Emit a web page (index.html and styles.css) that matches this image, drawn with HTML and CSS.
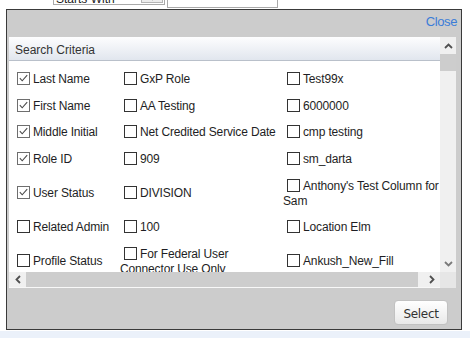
FILE: index.html
```html
<!DOCTYPE html>
<html>
<head>
<meta charset="utf-8">
<link rel="stylesheet" href="styles.css">
</head>
<body>
<div class="topbar">
  <div class="fake-select"><span class="sel-text">Starts With</span><span class="sel-btn"><svg width="9" height="6" viewBox="0 0 9 6"><polyline points="1,1 4.5,4.5 8,1" fill="none" stroke="#555" stroke-width="1.3"/></svg></span></div>
  <div class="fake-input"></div>
</div>
<div class="dialog">
  <div class="dlg-head"><a class="close">Close</a></div>
  <div class="panel">
    <div class="viewport">
      <div class="crit-head">Search Criteria</div>
      <div class="table-wrap">
        <table class="crit">
          <colgroup><col class="c1"><col class="c2"><col class="c3"></colgroup>
          <tr>
            <td><span class="cb on"><svg width="11" height="11" viewBox="0 0 11 11"><polyline points="1.8,5.2 4.2,7.8 9.2,2.2" fill="none" stroke="#4a4a4a" stroke-width="1.1"/></svg></span>Last Name</td>
            <td><span class="cb"></span>GxP Role</td>
            <td><span class="cb"></span>Test99x</td>
          </tr>
          <tr>
            <td><span class="cb on"><svg width="11" height="11" viewBox="0 0 11 11"><polyline points="1.8,5.2 4.2,7.8 9.2,2.2" fill="none" stroke="#4a4a4a" stroke-width="1.1"/></svg></span>First Name</td>
            <td><span class="cb"></span>AA Testing</td>
            <td><span class="cb"></span>6000000</td>
          </tr>
          <tr>
            <td><span class="cb on"><svg width="11" height="11" viewBox="0 0 11 11"><polyline points="1.8,5.2 4.2,7.8 9.2,2.2" fill="none" stroke="#4a4a4a" stroke-width="1.1"/></svg></span>Middle Initial</td>
            <td><span class="cb"></span>Net Credited Service Date</td>
            <td><span class="cb"></span>cmp testing</td>
          </tr>
          <tr>
            <td><span class="cb on"><svg width="11" height="11" viewBox="0 0 11 11"><polyline points="1.8,5.2 4.2,7.8 9.2,2.2" fill="none" stroke="#4a4a4a" stroke-width="1.1"/></svg></span>Role ID</td>
            <td><span class="cb"></span>909</td>
            <td><span class="cb"></span>sm_darta</td>
          </tr>
          <tr>
            <td><span class="cb on"><svg width="11" height="11" viewBox="0 0 11 11"><polyline points="1.8,5.2 4.2,7.8 9.2,2.2" fill="none" stroke="#4a4a4a" stroke-width="1.1"/></svg></span>User Status</td>
            <td><span class="cb"></span>DIVISION</td>
            <td><span class="cb"></span>Anthony's Test Column for Sam</td>
          </tr>
          <tr>
            <td><span class="cb"></span>Related Admin</td>
            <td><span class="cb"></span>100</td>
            <td><span class="cb"></span>Location Elm</td>
          </tr>
          <tr>
            <td><span class="cb"></span>Profile Status</td>
            <td><span class="cb"></span>For Federal User Connector Use Only</td>
            <td><span class="cb"></span>Ankush_New_Fill</td>
          </tr>
        </table>
      </div>
    </div>
    <div class="vbar">
      <div class="sb-btn v"><svg width="9" height="6" viewBox="0 0 9 6"><polyline points="1,5 4.5,1.5 8,5" fill="none" stroke="#505050" stroke-width="1.8"/></svg></div>
      <div class="thumb-v"></div>
      <div class="track"></div>
      <div class="sb-btn v"><svg width="9" height="6" viewBox="0 0 9 6"><polyline points="1,1 4.5,4.5 8,1" fill="none" stroke="#7a7a7a" stroke-width="1.8"/></svg></div>
    </div>
    <div class="hbar">
      <div class="sb-btn h"><svg width="6" height="9" viewBox="0 0 6 9"><polyline points="5,1 1.5,4.5 5,8" fill="none" stroke="#505050" stroke-width="1.8"/></svg></div>
      <div class="thumb-h"></div>
      <div class="track"></div>
      <div class="sb-btn h"><svg width="6" height="9" viewBox="0 0 6 9"><polyline points="1,1 4.5,4.5 1,8" fill="none" stroke="#505050" stroke-width="1.8"/></svg></div>
    </div>
    <div class="corner"></div>
  </div>
  <div class="dlg-foot"><button class="btn">Select</button></div>
</div>
<div class="page-strip"></div>
</body>
</html>
```

FILE: styles.css
```css
html, body {
  margin: 0;
  padding: 0;
}
body {
  background: #ffffff;
  font-family: "Liberation Sans", Arial, sans-serif;
  width: 470px;
  height: 338px;
  overflow: hidden;
}

/* top strip (cut-off search row) */
.topbar {
  height: 9px;
  overflow: hidden;
  display: flex;
  align-items: flex-end;
}
.fake-select {
  margin-left: 53px;
  margin-bottom: 4px;
  width: 112px;
  height: 20px;
  box-sizing: border-box;
  border: 1px solid #a9a9a9;
  display: flex;
  background: #fff;
}
.sel-text {
  flex: 1;
  padding: 4px 0 0 2px;
  font-size: 12px;
  line-height: 18px;
  color: #222;
}
.sel-btn {
  width: 22px;
  margin: 1px;
  box-sizing: border-box;
  border: 1px solid #b5b5b5;
  background: #ececec;
  display: flex;
  align-items: flex-end;
  justify-content: center;
  padding-bottom: 1px;
}
.fake-input {
  margin-left: 2px;
  margin-bottom: 1px;
  width: 111px;
  height: 22px;
  box-sizing: border-box;
  border: 1px solid #a9a9a9;
  background: #fff;
}

/* dialog */
.dialog {
  margin-left: 6px;
  width: 456px;
  height: 321px;
  box-sizing: border-box;
  border: 1px solid #3a3a3a;
  background: #cccccc;
  display: flex;
  flex-direction: column;
}
.dlg-head {
  height: 27px;
  flex: none;
  box-sizing: border-box;
  padding: 2px 4px 0 0;
  text-align: right;
}
.close {
  font-size: 13px;
  line-height: 15px;
  color: #3b7dd8;
  letter-spacing: -0.4px;
  text-decoration: none;
}

.panel {
  flex: none;
  margin-left: 2px;
  width: 447px;
  height: 251px;
  display: grid;
  grid-template-columns: 431px 16px;
  grid-template-rows: 235px 16px;
  background: #ffffff;
}
.viewport {
  overflow: hidden;
  background: #fff;
}
.crit-head {
  height: 24px;
  box-sizing: border-box;
  padding: 6px 0 0 6px;
  font-size: 12px;
  line-height: 15px;
  color: #333;
  background: linear-gradient(#fdfdfe, #e1e6ee);
  border-bottom: 1px solid #b9c0ca;
}
.table-wrap {
  padding-top: 5px;
}
.crit {
  border-collapse: collapse;
  table-layout: fixed;
  width: 432px;
}
.c1 { width: 107px; }
.c2 { width: 163px; }
.c3 { width: 162px; }
.crit td {
  padding: 6px 0 6px 4px;
  vertical-align: middle;
  font-size: 12px;
  line-height: 14.7px;
  color: #1e1e24;
  letter-spacing: -0.15px;
}
.cb {
  display: inline-block;
  width: 13px;
  height: 13px;
  box-sizing: border-box;
  border: 1px solid #333;
  background: #fff;
  margin: 0 3px 0 4px;
  vertical-align: -2px;
  position: relative;
}
.cb.on {
  border-color: #6e6e6e;
}
.cb svg {
  display: block;
}

/* fake scrollbars */
.vbar {
  background: #f0f0f0;
  display: flex;
  flex-direction: column;
}
.hbar {
  background: #f0f0f0;
  display: flex;
  box-sizing: border-box;
  border-bottom: 1px solid #f8f8f8;
}
.sb-btn {
  flex: none;
  display: flex;
  align-items: center;
  justify-content: center;
  background: #f0f0f0;
}
.sb-btn.v { height: 17px; }
.sb-btn.h { width: 17px; }
.thumb-v {
  flex: none;
  height: 17px;
  background: #cdcdcd;
}
.thumb-h {
  flex: none;
  width: 392px;
  background: #cdcdcd;
}
.track { flex: 1; }
.corner {
  background: #e6e6e6;
}

/* footer */
.dlg-foot {
  flex: 1;
  display: flex;
  justify-content: flex-end;
  align-items: flex-start;
  padding: 12px 13px 0 0;
}
.btn {
  width: 54px;
  height: 25px;
  box-sizing: border-box;
  margin: 0;
  padding: 2px 0 0 0;
  border: 1px solid #c2c2c2;
  border-radius: 4px;
  background: linear-gradient(#ffffff, #e9e9e9);
  font-family: "DejaVu Sans", Tahoma, sans-serif;
  font-size: 12px;
  letter-spacing: -0.3px;
  color: #333;
}

.page-strip {
  margin-top: 1px;
  height: 8px;
  background: #ebf1fa;
}
```
